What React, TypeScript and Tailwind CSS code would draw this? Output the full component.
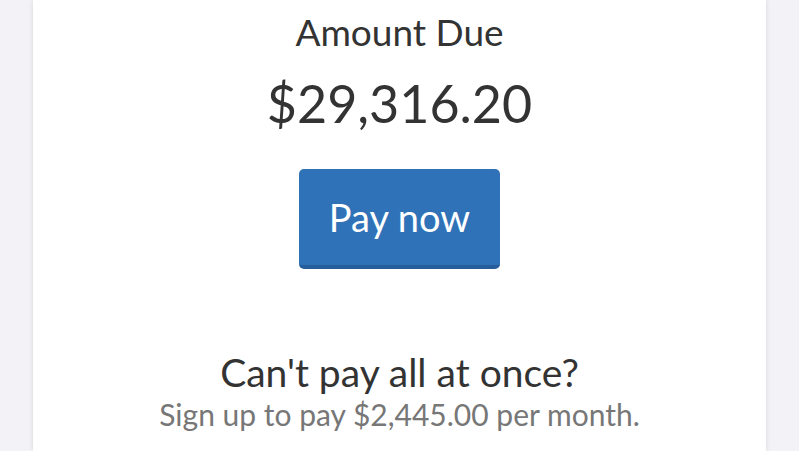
export default function App() {
  return (
    <div className="min-h-screen bg-[#f3f2f7] px-[33px] font-['Lato',sans-serif]">
      <div className="flex min-h-[451px] flex-col items-center bg-white pt-[8px] text-center shadow-[0_0_5px_rgba(0,0,0,0.12)]">
        <h2 className="text-[37px] leading-[48px] text-[#333333]">Amount Due</h2>
        <div className="mt-[15px] text-[52px] leading-[64px] text-[#333333]">$29,316.20</div>
        <button className="mt-[34px] h-[100px] w-[201px] rounded-[5px] border-b-[4px] border-[#255e9a] bg-[#2f72b8] text-[38px] text-white">
          Pay now
        </button>
        <h3 className="mt-[83px] text-[39px] leading-[40px] text-[#333333]">Can't pay all at once?</h3>
        <p className="mt-[2px] text-[30px] leading-[40px] text-[#777777]">Sign up to pay $2,445.00 per month.</p>
      </div>
    </div>
  );
}
